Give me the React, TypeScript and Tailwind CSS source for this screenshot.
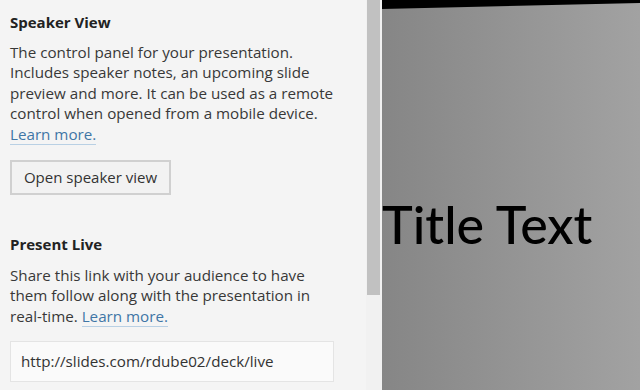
const LearnMore = () => (
  <a className="text-[#3f76a6] border-b border-[#b9d0e4]" href="#">
    Learn more.
  </a>
);

const App = () => {
  return (
    <div className="flex w-[640px] h-[390px] overflow-hidden font-['Open_Sans',sans-serif]">
      <aside className="w-[366px] h-full bg-[#f4f4f4] pl-[10px] pt-[12px] text-[15.2px] leading-[20.5px] text-[#383838]">
        <h3 className="font-bold text-[15px] text-[#222] mb-[9px]">Speaker View</h3>
        <p className="w-[326px]">
          The control panel for your presentation. Includes speaker notes, an
          upcoming slide preview and more. It can be used as a remote control
          when opened from a mobile device. <LearnMore />
        </p>
        <button className="mt-[16px] h-[35px] w-[161px] border-2 border-[#d0d0d0] bg-[#f2f2f2] text-[15px] text-[#333]">
          Open speaker view
        </button>
        <h3 className="mt-[39px] font-bold text-[15px] text-[#222] mb-[10px]">Present Live</h3>
        <p className="w-[326px]">
          Share this link with your audience to have them follow along with the
          presentation in real-time. <LearnMore />
        </p>
        <div className="mt-[15px] h-[41px] w-[324px] flex items-center px-[10px] bg-[#fafafa] border border-[#e4e4e4] text-[#333]">
          http://slides.com/rdube02/deck/live
        </div>
      </aside>
      <div className="w-[16px] h-full bg-[#f1f1f1] flex pl-[1px]">
        <div className="w-[13px] h-[295px] bg-[#c1c1c1]" />
      </div>
      <main className="flex-1 h-full bg-gradient-to-r from-[#868686] to-[#a2a2a2] flex flex-col">
        <div className="h-[9px] bg-black [clip-path:polygon(0_0,100%_0,100%_3px,0_9px)]" />
        <h1 className="mt-[189px] font-['Lato',sans-serif] font-medium text-[52px] leading-none text-black">
          Title Text
        </h1>
      </main>
    </div>
  );
};

export default App;
